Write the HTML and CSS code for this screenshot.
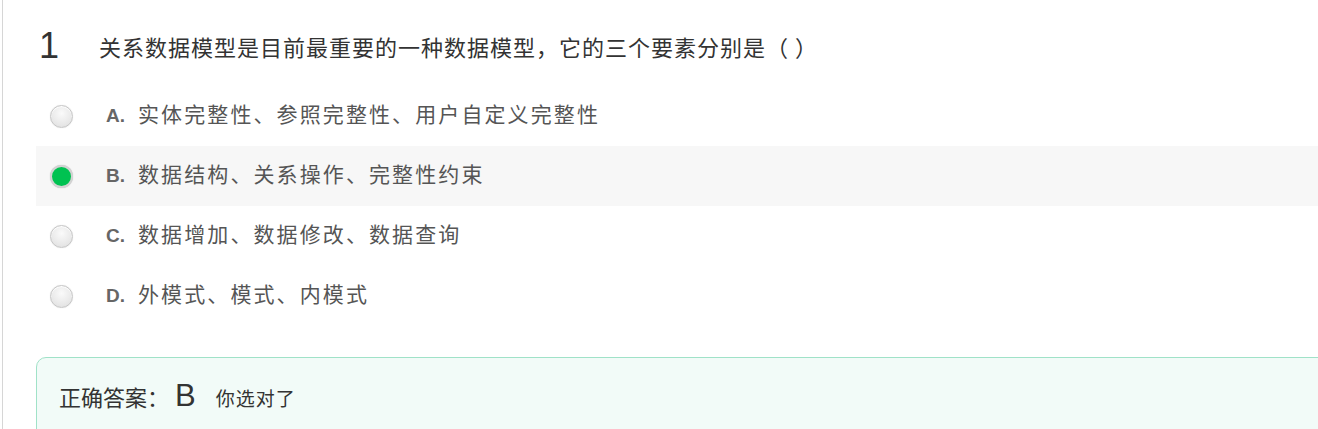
FILE: index.html
```html
<!DOCTYPE html>
<html lang="zh-CN">
<head>
<meta charset="utf-8">
<link rel="stylesheet" href="styles.css">
</head>
<body>
<div class="page">
  <div class="question">
    <span class="qnum">1</span>
    <span class="qtext">关系数据模型是目前最重要的一种数据模型，它的三个要素分别是（ ）</span>
  </div>
  <ul class="options">
    <li class="option"><span class="radio"></span><span class="label"><span class="letter">A.</span><span class="otext">实体完整性、参照完整性、用户自定义完整性</span></span></li>
    <li class="option selected"><span class="radio checked"></span><span class="label"><span class="letter">B.</span><span class="otext">数据结构、关系操作、完整性约束</span></span></li>
    <li class="option"><span class="radio"></span><span class="label"><span class="letter">C.</span><span class="otext">数据增加、数据修改、数据查询</span></span></li>
    <li class="option"><span class="radio"></span><span class="label"><span class="letter">D.</span><span class="otext">外模式、模式、内模式</span></span></li>
  </ul>
  <div class="answer">
    <span class="alabel">正确答案：</span><span class="aval">B</span><span class="anote">你选对了</span>
  </div>
</div>
</body>
</html>
```

FILE: styles.css
```css
html, body {
  margin: 0;
  padding: 0;
  overflow: hidden;
  background: #fff;
}
body {
  font-family: "Noto Sans CJK SC", "Liberation Sans", sans-serif;
  color: #333;
}
.page {
  margin-left: 2px;
  border-left: 1px solid #d6d6d6;
  min-height: 429px;
  width: 1400px;
  padding-left: 33px;
  padding-top: 24px;
  box-sizing: border-box;
}
.question {
  display: flex;
  align-items: center;
  height: 44px;
}
.qnum {
  font-family: "Liberation Sans", sans-serif;
  font-size: 36px;
  width: 60px;
  padding-left: 3px;
  color: #333;
}
.qtext {
  font-size: 22px;
  letter-spacing: 1px;
  color: #333;
}
.options {
  list-style: none;
  margin: 18px 0 0;
  padding: 0;
}
.option {
  display: flex;
  align-items: center;
  height: 60px;
  padding-left: 14px;
}
.option.selected {
  background: #f7f7f7;
}
.radio {
  width: 21px;
  height: 21px;
  border-radius: 50%;
  border: 1px solid #c6c6c6;
  background: radial-gradient(circle at 50% 35%, #fafafa, #e6e6e6 70%, #dcdcdc);
  box-shadow: inset 0 1px 1px #fff, 0 0 1px #ddd;
  flex: none;
}
.radio.checked {
  background: #00c251;
  border: 2px solid #d3d3d3;
  width: 19px;
  height: 19px;
  box-shadow: 0 0 1px #bbb;
}
.label {
  display: flex;
  align-items: baseline;
  margin-left: 33px;
  margin-top: -6px;
}
.letter {
  font-family: "Liberation Sans", sans-serif;
  font-weight: bold;
  font-size: 19px;
  color: #666;
  width: 32px;
}
.otext {
  font-size: 21px;
  letter-spacing: 2.1px;
  color: #555;
}
.answer {
  margin-top: 31px;
  height: 90px;
  border: 1px solid #a0e2c8;
  border-radius: 10px;
  background: #f2fbf8;
  display: flex;
  align-items: baseline;
  padding-left: 22px;
  padding-top: 20px;
  box-sizing: border-box;
}
.alabel {
  font-size: 22px;
  color: #333;
}
.aval {
  font-family: "Liberation Sans", sans-serif;
  font-size: 31px;
  color: #333;
  margin-left: 6px;
  margin-right: 20px;
}
.anote {
  font-size: 19px;
  letter-spacing: 1px;
  color: #333;
}
```
